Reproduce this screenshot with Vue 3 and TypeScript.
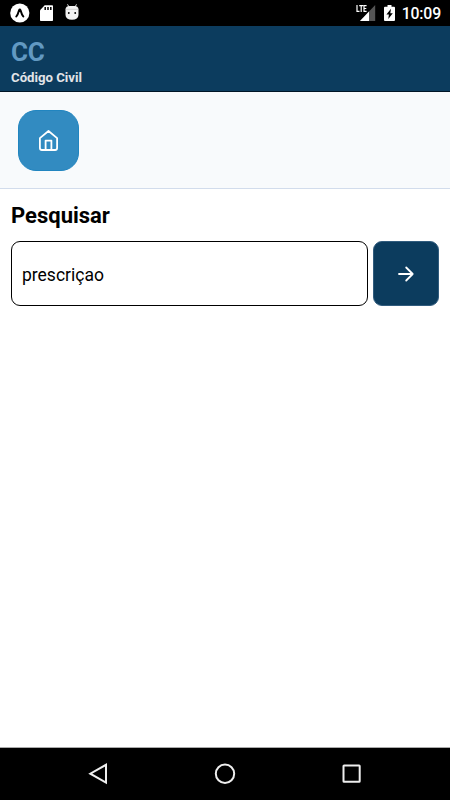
<script setup lang="ts">
import { ref } from 'vue'

const query = ref<string>('prescriçao')
const time = '10:09'
</script>

<template>
  <div class="screen">
    <div class="status">
      <svg class="expo" width="20" height="20" viewBox="0 0 20 20">
        <circle cx="9.8" cy="10" r="9.6" fill="#fff" />
        <path d="M6.3 13.5Q7.8 11.6 9 7.4Q9.8 5.8 10.6 7.4Q11.8 11.6 13.3 13.5" fill="none" stroke="#000" stroke-width="2" stroke-linecap="round" />
      </svg>
      <svg class="sd" width="14" height="17" viewBox="0 0 14 17">
        <path d="M4.7 .2H12.2Q13 .2 13 1V15.2Q13 16 12.2 16H.8Q0 16 0 15.2V5.2Z" fill="#fff" />
        <path d="M5.2 2V5M8 2V5M10.8 2V5" stroke="#000" stroke-width="1.5" />
      </svg>
      <svg class="droid" width="14" height="17" viewBox="0 0 14 17">
        <path d="M2.5 .3L4 3M11.5 .3L10 3" stroke="#ddd" stroke-width="1" />
        <path d="M.5 5Q1 2 4.5 2H9.5Q13 2 13.5 5V11Q13.3 15.7 7 15.7T.5 11Z" fill="#f2f2f2" />
        <path d="M.7 5.3H13.3" stroke="#bbb" stroke-width=".6" />
        <circle cx="3.8" cy="9" r=".9" /><circle cx="10.2" cy="9" r=".9" />
      </svg>
      <span class="fill"></span>
      <svg class="signal" width="20" height="18" viewBox="0 0 20 18">
        <path d="M19.2 1V17H4Z" fill="#555" />
        <path d="M13 7.5V17H4Z" fill="#fff" />
        <path d="M0 0H11V9H0Z" fill="#000" />
        <path d="M1 1V7.4H3.5M3.2 1.6H7.2M5.2 1.6V8M10.6 1.6H8V7.4H10.6M8 4.5H10.3" fill="none" stroke="#fff" stroke-width="1.2" />
      </svg>
      <svg class="battery" width="12" height="17" viewBox="0 0 12 17">
        <path d="M3.5 0H7.5V1.7H10Q11 1.7 11 2.7V15Q11 16 10 16H1Q0 16 0 15V2.7Q0 1.7 1 1.7H3.5Z" fill="#fff" />
        <path d="M7 3.8L2.4 9.6H4.9L4.3 13.9L8.8 8.2H6.3Z" />
      </svg>
      <span class="time">{{ time }}</span>
    </div>
    <header class="header">
      <div class="code">CC</div>
      <div class="name">Código Civil</div>
    </header>
    <nav class="toolbar">
      <button class="home" aria-label="Início">
        <svg width="21" height="23" viewBox="0 0 21 23">
          <path d="M1.9 9.1L10.5 2L19.1 9.1V19Q19.1 21 17.1 21H3.9Q1.9 21 1.9 19ZM7.6 20.8V11.6H13.4V20.8" fill="none" stroke="#fff" stroke-width="1.8" stroke-linecap="round" stroke-linejoin="round" />
        </svg>
      </button>
    </nav>
    <main class="content">
      <h1>Pesquisar</h1>
      <form class="search" @submit.prevent>
        <input v-model="query" type="text" aria-label="Pesquisar" />
        <button class="go" aria-label="Pesquisar">
          <svg width="18" height="18" viewBox="0 0 18 18">
            <path d="M2 9H15.7M9.2 2.5L15.7 9L9.2 15.5" fill="none" stroke="#fff" stroke-width="1.8" stroke-linecap="round" stroke-linejoin="round" />
          </svg>
        </button>
      </form>
    </main>
    <footer class="navbar">
      <svg width="24" height="24" viewBox="0 0 24 24"><path d="M20 2.8V20.6L4.3 11.7Z" /></svg>
      <svg width="24" height="24" viewBox="0 0 24 24"><circle cx="12" cy="11.8" r="9.2" /></svg>
      <svg width="24" height="24" viewBox="0 0 24 24"><rect x="3.5" y="3.5" width="16.2" height="16.3" rx=".6" /></svg>
    </footer>
  </div>
</template>

<style>
body { margin: 0; background: #fff; }
</style>

<style scoped>
.screen { width: 450px; height: 800px; display: flex; flex-direction: column; font-family: Roboto, sans-serif; color: #000; background: #fff; overflow: hidden; }
.screen * { box-sizing: border-box; }
svg { display: block; flex: none; }
button { border: 0; padding: 0; display: flex; align-items: center; justify-content: center; }
.status { height: 26px; flex: none; display: flex; align-items: flex-start; background: #000; padding: 0 9px 0 10px; }
.expo { margin-top: 3px; }
.sd { margin: 5px 0 0 10px; }
.droid { margin: 4px 0 0 11px; }
.fill { flex: 1; }
.signal { margin: 4px 8px 0 0; }
.battery { margin: 5px 6px 0 0; }
.time { color: #fff; font-size: 15.8px; line-height: 28px; font-weight: 500; letter-spacing: -0.15px; }
.header { height: 66px; flex: none; background: #0c3c5e; border-bottom: 1px solid #001526; padding: 10px 11px 0; }
.code { font-size: 26px; line-height: 32px; font-weight: 700; letter-spacing: -0.3px; color: #6299c2; }
.name { font-size: 13.2px; line-height: 16px; font-weight: 700; color: #e2e4e8; margin-top: 2px; }
.toolbar { height: 97px; flex: none; background: #f8fafc; border-bottom: 1px solid #d2dcec; padding: 18px; }
.home { width: 61px; height: 61px; border-radius: 18px; background: #328bc1; border: 1px solid #2185c0; }
.content { flex: 1; padding: 12px 11px 0; }
h1 { margin: 0; font-size: 22px; line-height: 30px; font-weight: 700; }
.search { display: flex; gap: 5px; margin-top: 10px; }
input { flex: 1; min-width: 0; height: 65px; border: 1.4px solid #000; border-radius: 9px; padding: 2px 10px 0; font-family: inherit; font-size: 17.5px; color: #000; background: #fff; outline: none; }
.go { width: 66px; height: 65px; border-radius: 9px; background: #0c3c5e; border: 1px solid #315c7e; }
.navbar { height: 53px; flex: none; background: #000; border-top: 1px solid #aaa; display: flex; justify-content: space-between; align-items: center; padding: 0 86px; }
.navbar path, .navbar circle, .navbar rect { fill: none; stroke: #eee; stroke-width: 2; }
</style>
